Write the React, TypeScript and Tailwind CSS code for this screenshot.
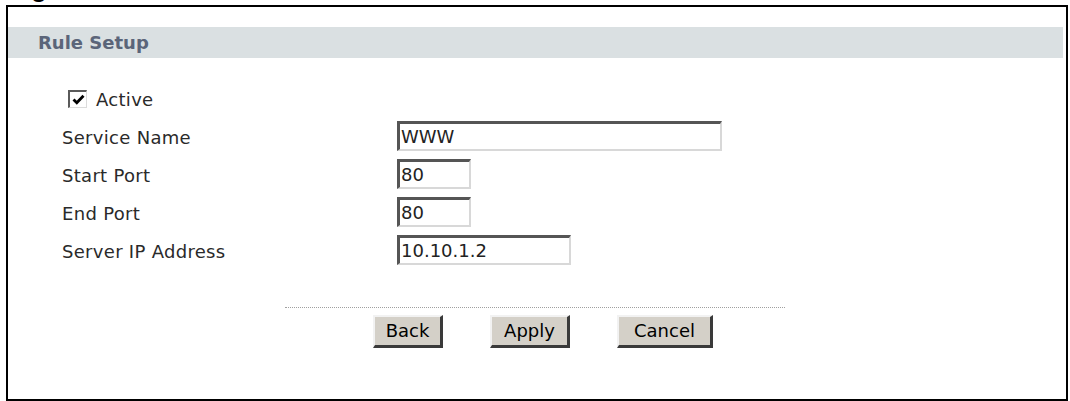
import React from "react";

const font = { fontFamily: '"DejaVu Sans", Verdana, sans-serif' };

function Field({ label, value, width }: { label: string; value: string; width: string }) {
  return (
    <div className="flex h-[38px] items-center">
      <div className="w-[389px] pl-[54px] pt-[3px] text-[18px] leading-none tracking-[0.3px] text-[#2a2a2a]">{label}</div>
      <div
        className={`${width} flex h-[30px] items-center border-t-[3px] border-l-[3px] border-r-2 border-b-2 border-t-[#555] border-l-[#555] border-r-[#d8d8d8] border-b-[#d8d8d8] bg-white pl-[1px] text-[18px] leading-none text-[#222]`}
      >
        {value}
      </div>
    </div>
  );
}

function Btn({ label, width }: { label: string; width: string }) {
  return (
    <div
      className={`${width} flex h-[33px] items-center justify-center border-t-2 border-l-2 border-r-[3px] border-b-[3px] border-t-[#f2f2f2] border-l-[#f2f2f2] border-r-[#3a3a3a] border-b-[#3a3a3a] bg-[#d4d0c8] text-[18px] leading-none text-black`}
    >
      {label}
    </div>
  );
}

export default function App() {
  return (
    <div className="relative h-[401px] w-[1070px] overflow-hidden bg-white" style={font}>
      <div className="relative h-[5px] overflow-hidden">
        <span
          className="absolute left-[8px] top-[-25px] whitespace-nowrap text-[26px] font-bold leading-none text-black"
          style={{ fontFamily: '"Liberation Sans", Arial, sans-serif' }}
        >
          Figure
        </span>
      </div>
      <div className="ml-[6px] h-[396px] w-[1062px] border-2 border-black bg-white">
        <div className="mt-[20px] mr-[3px] flex h-[31px] items-center bg-[#dae0e2] pl-[30px] text-[18px] font-bold leading-none text-[#5b6579]">
          Rule Setup
        </div>
        <div className="mt-[30px] flex h-[22px] items-center pl-[60px]">
          <div className="flex h-[18px] w-[19px] items-center justify-center border-t-2 border-l-2 border-r border-b border-t-[#5a5a5a] border-l-[#5a5a5a] border-r-[#dcdcdc] border-b-[#dcdcdc] bg-white">
            <svg width="13" height="11" viewBox="0 0 13 11">
              <path d="M1.5 5.5 L4.8 8.8 L11.5 1.8" fill="none" stroke="#000" strokeWidth="2.8" />
            </svg>
          </div>
          <span className="ml-[9px] pt-[2px] text-[18px] leading-none tracking-[0.3px] text-[#2a2a2a]">Active</span>
        </div>
        <div className="mt-[7px] flex flex-col">
          <Field label="Service Name" value="WWW" width="w-[325px]" />
          <Field label="Start Port" value="80" width="w-[74px]" />
          <Field label="End Port" value="80" width="w-[74px]" />
          <Field label="Server IP Address" value="10.10.1.2" width="w-[174px]" />
        </div>
        <div className="ml-[277px] mt-[38px] w-[500px] border-t border-dotted border-[#a0a0a0]" />
        <div className="mt-[7px] flex gap-[47px] pl-[365px]">
          <Btn label="Back" width="w-[70px]" />
          <Btn label="Apply" width="w-[80px]" />
          <Btn label="Cancel" width="w-[96px]" />
        </div>
      </div>
    </div>
  );
}
